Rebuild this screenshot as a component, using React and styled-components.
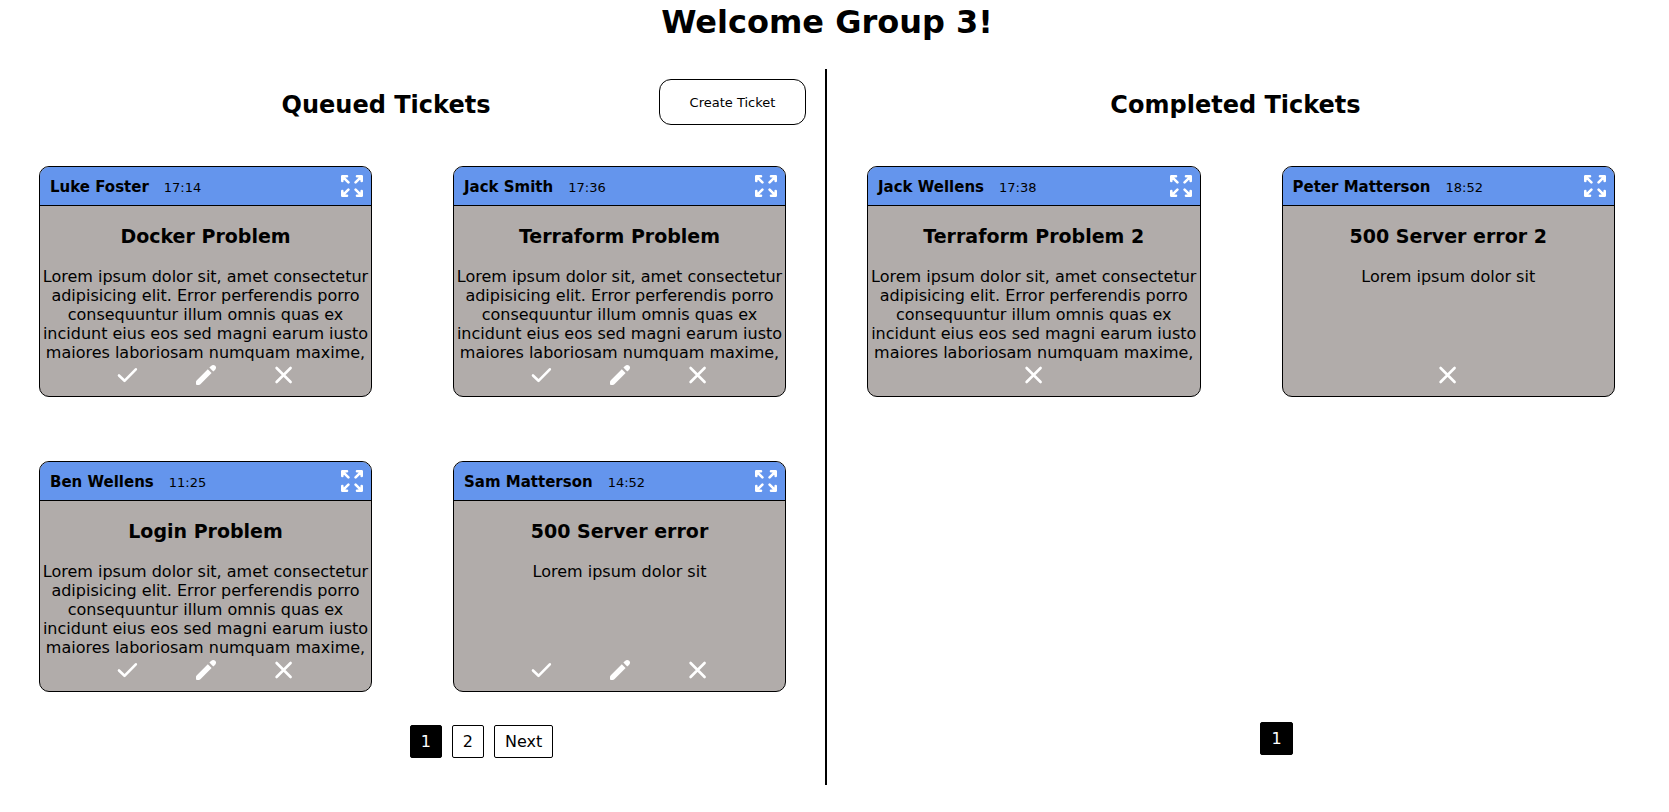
import React from "react";
import styled, { createGlobalStyle } from "styled-components";

const GlobalStyle = createGlobalStyle`
  * { box-sizing: border-box; }
  body {
    margin: 0;
    background: #fff;
    color: #000;
    font-family: Verdana, "DejaVu Sans", sans-serif;
    font-size: 16px;
  }
`;

const Page = styled.main`
  padding-right: 15px;
`;

const Welcome = styled.h1`
  margin: 0;
  padding-top: 2px;
  font-size: 32px;
  line-height: 40px;
  text-align: center;
`;

const Board = styled.div`
  display: grid;
  grid-template-columns: 1fr 1fr;
  margin-top: 27px;
`;

const Column = styled.section`
  padding-bottom: 27px;
  border-right: ${(p) => (p.$divided ? "2px solid #000" : "none")};
`;

const ColumnHeader = styled.header`
  display: flex;
  align-items: center;
  height: 66px;
  padding: ${(p) => (p.$withAction ? "0 19px 0 113px" : "0 10px 0 0")};
`;

const ColumnTitle = styled.h2`
  flex: 1;
  margin: 0;
  padding-top: 6px;
  font-size: 24px;
  line-height: 30px;
  text-align: center;
`;

const CreateButton = styled.button`
  width: 147px;
  height: 46px;
  border: 1px solid #000;
  border-radius: 12px;
  background: #fff;
  color: #000;
  font: inherit;
  font-size: 13px;
  cursor: pointer;
`;

const Cards = styled.div`
  display: grid;
  grid-template-columns: 1fr 1fr;
  grid-auto-rows: 231px;
  gap: 64px 81px;
  min-height: 526px;
  margin-top: 31px;
  padding: ${(p) => (p.$divided ? "0 39px" : "0 39px 0 40px")};
`;

const Card = styled.article`
  display: flex;
  flex-direction: column;
  overflow: hidden;
  border: 1px solid #000;
  border-radius: 10px;
  background: #b1acaa;
  text-align: center;
`;

const CardHeader = styled.header`
  display: flex;
  align-items: center;
  flex: none;
  height: 39px;
  padding: 0 8px 0 10px;
  border-bottom: 1px solid #000;
  background: #6495ed;
`;

const Author = styled.strong`
  padding-top: 2px;
  font-size: 15px;
`;

const Time = styled.time`
  flex: 1;
  margin-left: 15px;
  padding-top: 3px;
  font-size: 13px;
  text-align: left;
`;

const IconButton = styled.button`
  display: flex;
  padding: 0;
  border: 0;
  background: none;
  color: #fff;
  cursor: pointer;
`;

const Subject = styled.h3`
  margin: 18px 0 19px;
  font-size: 19px;
  line-height: 24px;
`;

const Body = styled.p`
  flex: 1;
  min-height: 0;
  margin: 0;
  overflow: hidden;
  line-height: 19px;
`;

const Actions = styled.div`
  display: flex;
  flex: none;
  align-items: center;
  justify-content: center;
  gap: 50px;
  padding-bottom: 7px;
`;

const Pagination = styled.nav`
  display: flex;
  justify-content: center;
  gap: 10px;
  margin-top: ${(p) => (p.$divided ? "33px" : "30px")};
  padding-left: ${(p) => (p.$divided ? "138px" : "72px")};
`;

const PageButton = styled.button`
  height: 33px;
  padding: 0 10px;
  border: 1px solid #000;
  border-radius: 2px;
  background: ${(p) => (p.$current ? "#000" : "#fff")};
  color: ${(p) => (p.$current ? "#fff" : "#000")};
  font: inherit;
  cursor: pointer;
`;

const StrokeIcon = styled.svg`
  fill: none;
  stroke: currentColor;
  stroke-width: 2.6;
  stroke-linecap: round;
  stroke-linejoin: round;
`;

const ExpandIcon = () => (
  <StrokeIcon width="22" height="22" viewBox="0 0 22 22" aria-hidden="true">
    <path d="M1.3 6V1.3H6M1.6 1.6L7.4 7.4" />
    <path d="M16 1.3H20.7V6M20.4 1.6L14.6 7.4" />
    <path d="M1.3 16V20.7H6M1.6 20.4L7.4 14.6" />
    <path d="M16 20.7H20.7V16M20.4 20.4L14.6 14.6" />
  </StrokeIcon>
);

const CheckIcon = () => (
  <StrokeIcon width="28" height="28" viewBox="0 0 28 28" aria-hidden="true">
    <path d="M5 14.5L10.5 19.8L21.8 8.3" />
  </StrokeIcon>
);

const PencilIcon = () => (
  <svg width="28" height="28" viewBox="0 0 28 28" fill="currentColor" aria-hidden="true">
    <path d="M4 20.8Q4 20 4.6 19.4L15.8 8.2L19.6 12L8.4 23.2Q7.6 24 6.8 24H5Q4 24 4 23Z" />
    <path d="M17.4 6.6L19 5Q21.2 3 23.2 4.8Q25 6.8 23 9L21.2 10.4Z" />
  </svg>
);

const CloseIcon = () => (
  <StrokeIcon width="28" height="28" viewBox="0 0 28 28" aria-hidden="true">
    <path d="M6.6 7L20.6 21M20.6 7L6.6 21" />
  </StrokeIcon>
);

const lorem =
  "Lorem ipsum dolor sit, amet consectetur adipisicing elit. Error perferendis porro consequuntur illum omnis quas ex incidunt eius eos sed magni earum iusto maiores laboriosam numquam maxime,";

const queued = [
  { author: "Luke Foster", time: "17:14", subject: "Docker Problem", body: lorem },
  { author: "Jack Smith", time: "17:36", subject: "Terraform Problem", body: lorem },
  { author: "Ben Wellens", time: "11:25", subject: "Login Problem", body: lorem },
  { author: "Sam Matterson", time: "14:52", subject: "500 Server error", body: "Lorem ipsum dolor sit" },
];

const completed = [
  { author: "Jack Wellens", time: "17:38", subject: "Terraform Problem 2", body: lorem },
  { author: "Peter Matterson", time: "18:52", subject: "500 Server error 2", body: "Lorem ipsum dolor sit" },
];

function Ticket({ author, time, subject, body, open }) {
  return (
    <Card>
      <CardHeader>
        <Author>{author}</Author>
        <Time>{time}</Time>
        <IconButton aria-label="Expand ticket"><ExpandIcon /></IconButton>
      </CardHeader>
      <Subject>{subject}</Subject>
      <Body>{body}</Body>
      <Actions>
        {open && <IconButton aria-label="Complete ticket"><CheckIcon /></IconButton>}
        {open && <IconButton aria-label="Edit ticket"><PencilIcon /></IconButton>}
        <IconButton aria-label="Delete ticket"><CloseIcon /></IconButton>
      </Actions>
    </Card>
  );
}

export default function App() {
  return (
    <Page>
      <GlobalStyle />
      <Welcome>Welcome Group 3!</Welcome>
      <Board>
        <Column $divided>
          <ColumnHeader $withAction>
            <ColumnTitle>Queued Tickets</ColumnTitle>
            <CreateButton>Create Ticket</CreateButton>
          </ColumnHeader>
          <Cards $divided>
            {queued.map((t) => <Ticket key={t.author} {...t} open />)}
          </Cards>
          <Pagination $divided aria-label="Queued pages">
            <PageButton $current aria-current="page">1</PageButton>
            <PageButton>2</PageButton>
            <PageButton>Next</PageButton>
          </Pagination>
        </Column>
        <Column>
          <ColumnHeader>
            <ColumnTitle>Completed Tickets</ColumnTitle>
          </ColumnHeader>
          <Cards>
            {completed.map((t) => <Ticket key={t.author} {...t} />)}
          </Cards>
          <Pagination aria-label="Completed pages">
            <PageButton $current aria-current="page">1</PageButton>
          </Pagination>
        </Column>
      </Board>
    </Page>
  );
}
